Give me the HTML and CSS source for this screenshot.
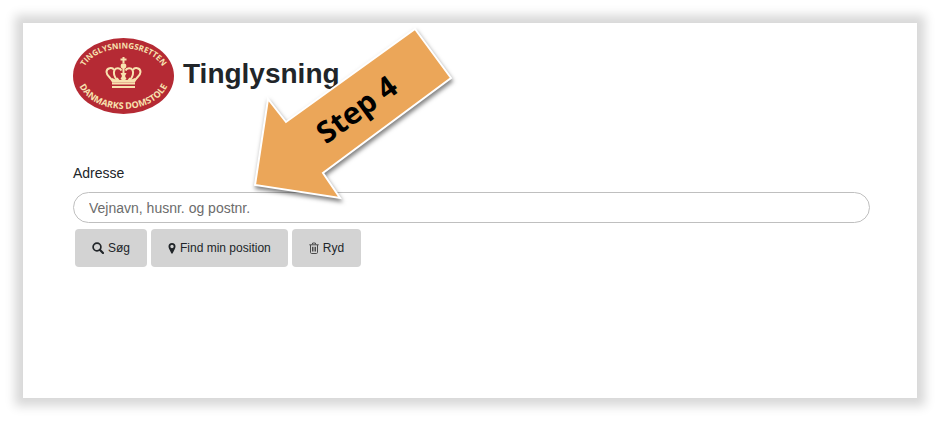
FILE: index.html
```html
<!DOCTYPE html>
<html lang="da">
<head>
    <meta charset="UTF-8">
    <meta name="viewport" content="width=device-width, initial-scale=1.0">
    <title>Tinglysning</title>
    <link rel="stylesheet" href="styles.css">
</head>
<body>

    <main class="page">
        <header class="header">
            <svg class="logo" viewBox="0 0 102 76" role="img" aria-label="Tinglysningsretten, Danmarks Domstole">
                <defs>
                    <path id="arcTop" d="M 9 38 A 41.500 27.500 0 0 1 92 38"/>
                    <path id="arcBottom" d="M 4 37 A 46.500 34 0 0 0 97 37"/>
                </defs>
                <ellipse cx="50.500" cy="38" rx="50.500" ry="38" fill="#b52a34"/>
                <text class="logo-text"><textPath href="#arcTop" startOffset="50%">TINGLYSNINGSRETTEN</textPath></text>
                <text class="logo-text logo-text-bottom"><textPath href="#arcBottom" startOffset="50%">DANMARKS DOMSTOLE</textPath></text>
                <!-- crown -->
                <g fill="none" stroke="#f8e3b0" stroke-width="2">
                    <path d="M50.500 19v6M47.500 21.500h6"/>
                    <path d="M40 44C38 39 33.500 38 33.500 34c0-4.500 6-5 7.500-2M61 44C63 39 67.500 38 67.500 34c0-4.500-6-5-7.500-2"/>
                    <path d="M44.500 43c-3-4-4.500-8-3-11 1.500-2.500 5.500-2.500 7 .5M56.500 43c3-4 4.500-8 3-11-1.500-2.500-5.500-2.500-7 .5"/>
                    <path d="M50.500 29v14"/>
                    <path d="M39 45.500h23M39 49h23"/>
                </g>
                <g fill="#f8e3b0">
                    <circle cx="50.500" cy="28" r="2.800"/>
                    <path d="M47.500 35h6l-1.500 3 1.500 3-3 2-3-2 1.500-3zM39 40l3.500 1.500 2-2 2 2.500h8l2-2.500 2 2 3.500-1.500v4.500H39z"/>
                </g>
            </svg>
            <h1>Tinglysning</h1>
        </header>

        <form class="search">
            <label for="address">Adresse</label>
            <input type="text" id="address" placeholder="Vejnavn, husnr. og postnr.">
            <div class="buttons">
                <button type="button">
                    <svg class="icon" viewBox="0 0 12 12" aria-hidden="true"><path d="M7.800 7.800L11 11" stroke-width="2.200" stroke-linecap="round"/><circle cx="5" cy="5" r="3.900" stroke-width="1.700"/></svg>
                    Søg
                </button>
                <button type="button">
                    <svg class="icon icon-pin" viewBox="0 0 8 12" aria-hidden="true"><path class="solid" fill-rule="evenodd" d="M4 1a3.500 3.500 0 0 1 3.500 3.500c0 1-.3 1.500-.7 2.400L4.700 11.300c-.3.600-1.100.600-1.400 0L1.200 6.900C.8 6 .5 5.500.5 4.500A3.500 3.500 0 0 1 4 1zm0 1.800a1.700 1.700 0 1 0 0 3.400 1.700 1.700 0 0 0 0-3.400z"/></svg>
                    Find min position
                </button>
                <button type="button">
                    <svg class="icon icon-trash" viewBox="0 0 10 12" aria-hidden="true"><path d="M.3 2.800h9.400M3.200 2.500l.5-1.500h2.600l.5 1.500M1.500 3v7.300c0 .7.400 1.200 1 1.200h5c.6 0 1-.5 1-1.200V3M3.500 4.800v4.700M5 4.800v4.700M6.500 4.800v4.700"/></svg>
                    Ryd
                </button>
            </div>
        </form>

        <svg class="step-arrow" viewBox="0 0 210 180" role="img" aria-label="Step 4">
            <polygon points="165,4 201,53 73,148 90,173 5,160 18,74 36,97"/>
            <text transform="translate(113 93) rotate(-36)">Step 4</text>
        </svg>
    </main>

</body>
</html>
```
FILE: styles.css
```css
* {
    box-sizing: border-box;
}
body {
    margin: 0;
    padding: 23px 24px 24px 23px;
    background: #fff;
    color: #212529;
    font-family: "Liberation Sans", Arial, sans-serif;
    font-size: 14px;
}
.page {
    position: relative;
    min-height: calc(100vh - 47px);
    padding: 15px 47px 24px 50px;
    background: #fff;
    box-shadow: 0 0 10px 8px #d8d8d8;
}
.header {
    display: flex;
    align-items: center;
    gap: 8px;
}
.logo {
    width: 102px;
    height: 76px;
}
.logo-text {
    font-family: "Open Sans", sans-serif;
    font-size: 8px;
    font-weight: bold;
    fill: #f8e3b0;
    text-anchor: middle;
}
.logo-text-bottom {
    font-size: 9px;
}
h1 {
    margin: 0 0 4px;
    font-size: 28px;
    line-height: 32px;
}
.search {
    margin-top: 48px;
}
.search label {
    display: block;
    line-height: 22px;
}
.search input {
    display: block;
    width: 100%;
    height: 31px;
    margin-top: 8px;
    padding: 0 15px;
    border: 1px solid #bfbfbf;
    border-radius: 16px;
    background: #fff;
    color: #212529;
    font: inherit;
}
.search input::placeholder {
    color: #6c6c6c;
    opacity: 1;
}
.buttons {
    display: flex;
    gap: 4px;
    padding: 6px 2px;
}
.buttons button {
    display: flex;
    align-items: center;
    gap: 4px;
    height: 38px;
    padding: 0 17px;
    border: 0;
    border-radius: 4px;
    background: #d3d3d3;
    color: #212529;
    font-family: inherit;
    font-size: 12px;
}
.icon {
    width: 12px;
    height: 12px;
    fill: none;
    stroke: #212529;
}
.icon .solid {
    fill: #212529;
    stroke: none;
}
.icon-pin {
    width: 8px;
}
.icon-trash {
    width: 10px;
    stroke: #4a4a4a;
}
/* callout lying over the form */
.step-arrow {
    position: absolute;
    top: 2px;
    left: 227px;
    width: 210px;
    height: 180px;
    overflow: visible;
    pointer-events: none;
}
.step-arrow polygon {
    fill: #eba659;
    stroke: #fff;
    stroke-width: 2px;
    filter: drop-shadow(1px 3px 2px rgba(0, 0, 0, 0.5));
}
.step-arrow text {
    font-family: "Open Sans", sans-serif;
    font-size: 30px;
    font-weight: bold;
    fill: #000;
    text-anchor: middle;
}
```
